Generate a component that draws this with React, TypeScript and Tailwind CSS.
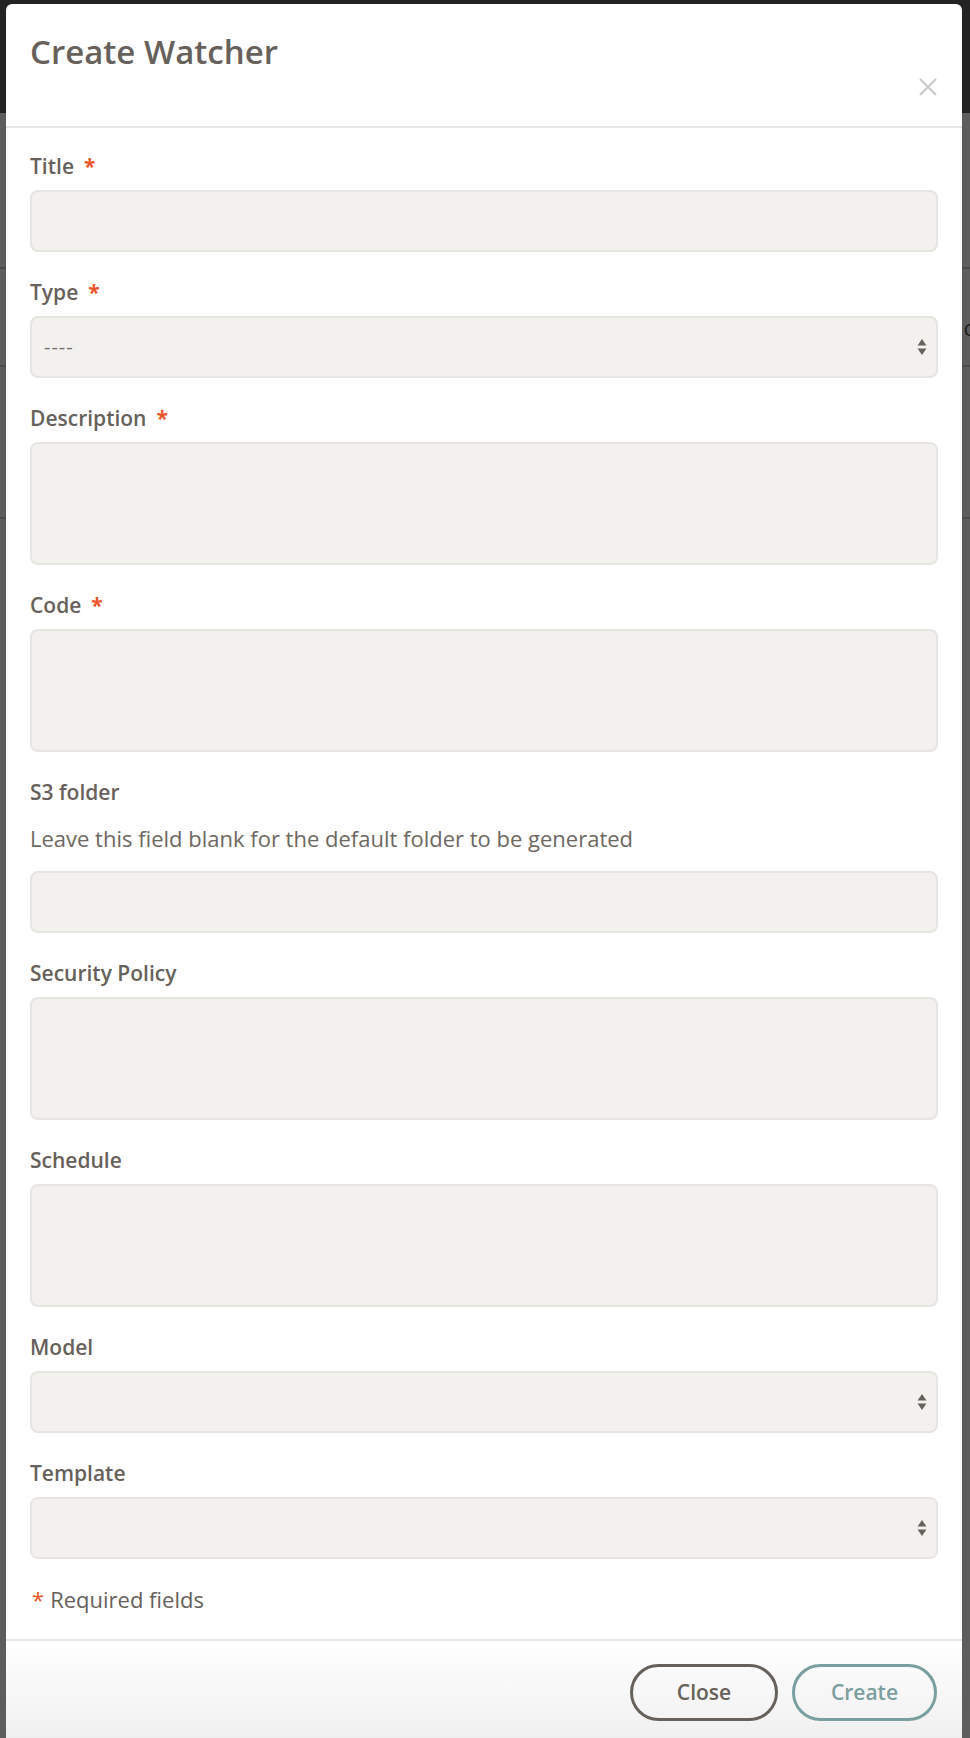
import React from "react";

const font = "font-['Open_Sans','Noto_Sans',sans-serif]";

function Label({ text, required }: { text: string; required?: boolean }) {
  return (
    <div className="mb-[10px] flex h-7 items-center text-[21px] font-semibold leading-7 text-[#67615b]">
      <span>{text}</span>
      {required && <span className="ml-[10px] font-bold text-[#e8562a]">*</span>}
    </div>
  );
}

function Arrows() {
  return (
    <svg
      width="12"
      height="20"
      viewBox="0 0 12 20"
      className="pointer-events-none absolute right-[10px] top-1/2 -translate-y-1/2"
    >
      <path d="M6 2 L10.5 8.5 L1.5 8.5 Z" fill="#67615b" />
      <path d="M6 18 L10.5 11.5 L1.5 11.5 Z" fill="#67615b" />
    </svg>
  );
}

const boxCls =
  "block w-full rounded-[8px] border-2 border-[#e7e5e1] bg-[#f2f1ee] px-[12px] text-[20px] text-[#6e6862] outline-none";

function TextField({ label, required }: { label: string; required?: boolean }) {
  return (
    <div className="mb-[26px]">
      <Label text={label} required={required} />
      <input type="text" className={`${boxCls} h-[62px]`} />
    </div>
  );
}

function AreaField({ label, required }: { label: string; required?: boolean }) {
  return (
    <div className="mb-[26px]">
      <Label text={label} required={required} />
      <textarea className={`${boxCls} h-[123px] resize-none`} />
    </div>
  );
}

function SelectField({
  label,
  required,
  value,
}: {
  label: string;
  required?: boolean;
  value?: string;
}) {
  return (
    <div className="mb-[26px]">
      <Label text={label} required={required} />
      <div className="relative">
        <div className={`${boxCls} flex h-[62px] items-center`}>
          <span className="text-[20px] tracking-[1px] text-[#77716b]">{value ?? ""}</span>
        </div>
        <Arrows />
      </div>
    </div>
  );
}

export default function App() {
  return (
    <div className={`relative h-[1738px] w-[970px] overflow-hidden bg-[#5d5d5d] ${font}`}>
      {/* dimmed page behind */}
      <div className="flex flex-col">
        <div className="h-[113px] bg-[#232323]" />
        <div className="h-[156px] border-b-2 border-[#4b4b4b]" />
        <div className="flex h-[98px] items-center justify-end border-b-2 border-[#4b4b4b] pt-[20px]">
          <span className="mr-[-4px] text-[22px] leading-6 text-[#1e1e1e]">c</span>
        </div>
        <div className="h-[152px] border-b-2 border-[#4b4b4b]" />
      </div>

      {/* modal */}
      <div className="absolute left-[6px] top-[4px] w-[956px] rounded-t-[6px] bg-white">
        <div className="flex h-[124px] items-start justify-between border-b-2 border-[#e6e6e6] pl-6 pr-[24px] pt-[28px]">
          <h1 className="text-[33px] font-semibold leading-10 text-[#67615b]">Create Watcher</h1>
          <button className="mt-[45px] text-[#c8c8c8]">
            <svg width="20" height="20" viewBox="0 0 20 20" fill="none" stroke="currentColor" strokeWidth="2">
              <path d="M2 2 L18 18 M18 2 L2 18" />
            </svg>
          </button>
        </div>

        <div className="px-6 pb-[26px] pt-6">
          <TextField label="Title" required />
          <SelectField label="Type" required value="----" />
          <AreaField label="Description" required />
          <AreaField label="Code" required />
          <div className="mb-[26px]">
            <Label text="S3 folder" />
            <p className="pb-[19px] pt-[8px] text-[22px] leading-7 text-[#6e6862]">
              Leave this field blank for the default folder to be generated
            </p>
            <input type="text" className={`${boxCls} h-[62px]`} />
          </div>
          <AreaField label="Security Policy" />
          <AreaField label="Schedule" />
          <SelectField label="Model" />
          <SelectField label="Template" />
          <div className="flex h-7 items-center pl-[2px] text-[22px] leading-7 text-[#67615b]">
            <span className="mr-[6px] text-[#e8562a]">*</span>
            <span>Required fields</span>
          </div>
        </div>

        <div className="flex justify-end gap-[14px] border-t-2 border-[#e6e6e6] bg-gradient-to-b from-white to-[#efefef] pb-6 pl-6 pr-[25px] pt-[23px]">
          <button className="h-[57px] w-[148px] rounded-full border-[3px] border-[#67615b] text-[21px] font-semibold text-[#67615b]">
            Close
          </button>
          <button className="h-[57px] w-[145px] rounded-full border-[3px] border-[#7b9e9e] text-[21px] font-semibold text-[#7b9e9e]">
            Create
          </button>
        </div>
      </div>
    </div>
  );
}
